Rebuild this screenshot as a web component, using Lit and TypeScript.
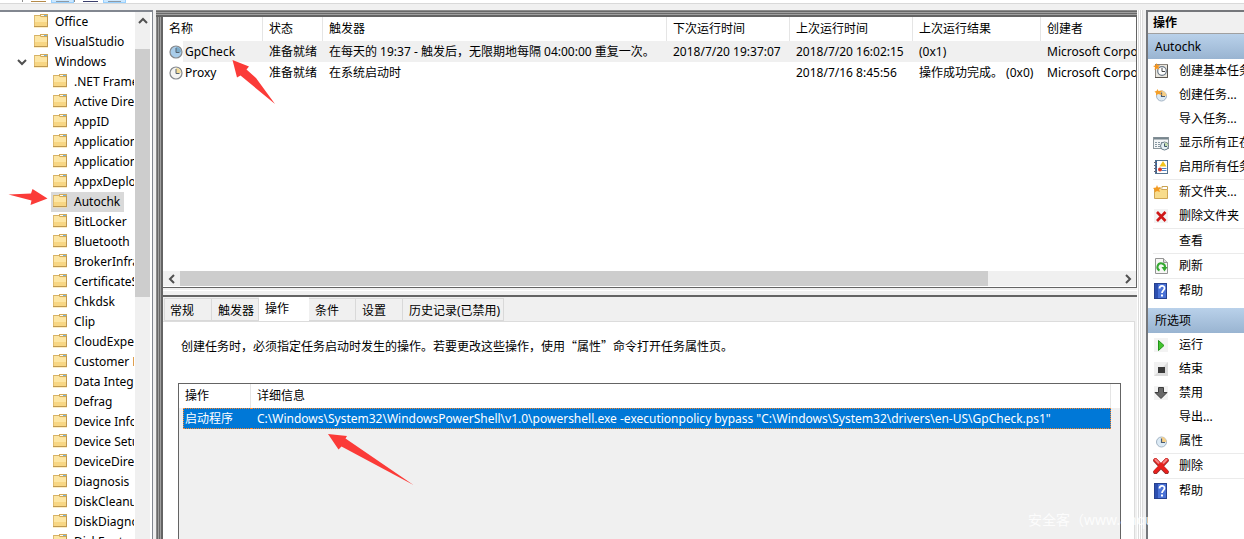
import { LitElement, html, css, svg, nothing } from "lit";
import { customElement, property, state } from "lit/decorators.js";
import { classMap } from "lit/directives/class-map.js";

const base = css`
  * {
    box-sizing: border-box;
  }
  button {
    font: inherit;
    color: inherit;
    background: none;
    border: 0;
    margin: 0;
    padding: 0;
    text-align: left;
    white-space: nowrap;
  }
  svg {
    display: block;
    flex: none;
  }
`;

const folder = html`<svg width="16" height="16" viewBox="0 0 16 16" aria-hidden="true">
  <path d="M1 1h14v12.500H1z" fill="#f9dc90" />
  <path d="M1 1h6v1H1z" fill="#d6b267" />
  <path d="M7 0h8v3H7z" fill="#d2a95a" />
  <path d="M8 1h3v1H8z" fill="#fffbe8" /><path d="M11 1h3v1h-3z" fill="#74b4dc" />
  <path d="M2 2h5l1 1.500h6V8H2z" fill="#fde6a4" />
  <path d="M2 8h12v4H2z" fill="#f7d684" />
  <path d="M1.500 1.500v11" stroke="#dfbc72" />
  <path d="M14.500 2v11M1 12.500h14" stroke="#bf9850" fill="none" />
</svg>`;

const clock = (face: string, wedge: string) => html`<svg width="14" height="14" viewBox="0 0 14 14" aria-hidden="true">
  <circle cx="7" cy="7" r="6" fill=${face} stroke="#85888c" stroke-width="1.200" />
  <path d="M7 7V2a5 5 0 0 1 5 5z" fill=${wedge} />
  <path d="M7 3V7.500H10.500" fill="none" stroke="#56636f" />
</svg>`;

const chevron = (d: string) => html`<svg width="10" height="10" viewBox="0 0 10 10" aria-hidden="true">
  <path d=${d} fill="none" stroke="#505050" stroke-width="2" />
</svg>`;

const smallClock = svg`
  <circle cx="8.500" cy="9" r="5" fill="#dceaf5" stroke="#a3b4c4"/>
  <path d="M8.500 9V4a5 5 0 0 1 5 5z" fill="#f7cf87"/>
  <path d="M8.500 5.500V9.500H12" fill="none" stroke="#4b5d72" stroke-width="1.200"/>`;

const glyphs: Record<string, unknown> = {
  basic: svg`
    <rect x="2.500" y="1.500" width="12" height="13" fill="#e9e6de" stroke="#8d8780"/>
    <path d="M14.500 2v12.500H2" fill="none" stroke="#5b5650"/>
    <circle cx="9" cy="8" r="4.300" fill="#fff" stroke="#6d7a88" stroke-width="1.200"/>
    <path d="M9 5v3.500h3" fill="none" stroke="#444"/>
    <path d="M3.500 0l1 2.300L7 2l-1.700 2L6.500 6.500 4 5.500 1.500 7 2 4.300 0 3l2.500-.5z" fill="#f5951d"/>`,
  task: svg`${smallClock}
    <path d="M4.500 2l1 2L10 3.500 7.500 5.500 9 8 5 7 3 8.500V6L1.500 4.500l2-.5z" fill="#f5a02a"/>`,
  running: svg`
    <rect x=".5" y="2.500" width="15" height="11" fill="#f4f6f7" stroke="#8b969c"/>
    <path d="M1 3.500h14" stroke="#76858d" stroke-width="2"/>
    <path d="M2 7.500h2m1 0h2m1 0h2M2 9.500h2m1 0h2M2 11.500h2m1 0h2" stroke="#8797a1"/>
    <circle cx="11.500" cy="11" r="4" fill="#e4f0f4" stroke="#6a7d88"/>
    <path d="M11.500 11V7.500A3.500 3.500 0 0 1 15 11z" fill="#c1dbae"/>
    <path d="M11.500 8.500V11.500H14" fill="none" stroke="#40566a"/>`,
  history: svg`
    <rect x="2.500" y="1.500" width="12" height="13" fill="#fff" stroke="#57748f"/>
    <path d="M3.500 2v12" stroke="#2f5f9f"/>
    <path d="M1 3.500h3M1 6.500h3M1 9.500h3M1 12.500h3" stroke="#667"/>
    <path d="M10 2l3.500 5.500h-7z" fill="#f4c51c"/>
    <path d="M8.500 9.500h5m-5 2h5" stroke="#4f82c4"/>
    <circle cx="7" cy="10.500" r="2" fill="#d83a2b"/>`,
  newFolder: svg`
    <path d="M9 4.500v-2h5.500v3" fill="#fff" stroke="#c9a252"/>
    <path d="M1.500 4.500h6L9 5.500h5.500v9h-13z" fill="#f8dc8c" stroke="#cfa655"/>
    <path d="M4 1l1 2.500 3-.5-2 2.500L7 8 4 7 1.500 8.500 2 6 0 4l3-.5z" fill="#f39a20"/>`,
  redX: svg`
    <rect x="1" y="1" width="14" height="14" fill="#f3f3f3"/>
    <path d="M4 4l8.500 9M12.500 4L4 13" stroke="#cf1717" stroke-width="2.600"/>`,
  refresh: svg`
    <path d="M2.500.5h8l4 4v11h-12z" fill="#f7f7f5" stroke="#959595"/>
    <path d="M10.500.5v4h4" fill="#ddd" stroke="#959595"/>
    <path d="M6.500 12.500A3.800 3.800 0 1 1 12 9.500" fill="none" stroke="#35a831" stroke-width="2"/>
    <path d="M8.500 9h6l-3 4.500z" fill="#35a831"/>`,
  help: svg`
    <rect x="1.500" y=".5" width="12" height="15" fill="#4a72d6" stroke="#27418f"/>
    <path d="M2 1h3v14H2z" fill="#2c4fb0"/>
    <path d="M6.500 5.500C6.500 2 11.500 2 11.500 5.200c0 2-2.500 2.300-2.500 4.800" fill="none" stroke="#fff" stroke-width="1.800"/>
    <path d="M8 11.500h2v2H8z" fill="#fff"/>`,
  run: svg`
    <rect x="1" y="1" width="14" height="14" fill="#f3f3f3"/>
    <path d="M5.500 3.500l5.500 5-5.500 5z" fill="#43c52e" stroke="#23931a"/>`,
  stop: svg`
    <rect x="1" y="1" width="14" height="14" fill="#dcdcdc"/>
    <path d="M1 1h14L1 15z" fill="#f1f1f1"/>
    <rect x="5" y="6" width="7" height="6" fill="#3a3a3a"/>`,
  disable: svg`
    <rect x="1" y="1" width="14" height="14" fill="#f3f3f3"/>
    <path d="M5.500 2.500h5v5h3.500L8 13.500 2 7.500h3.500z" fill="#686868" stroke="#3d3d3d"/>`,
  props: smallClock,
  remove: svg`
    <path d="M2.500 2.500l11 11.500M13.500 2.500L2.500 14" stroke="#8d3030" stroke-width="4.600" stroke-linecap="round"/>
    <path d="M2.500 2l11 11.500M13.500 2L2.500 13.500" stroke="#e8201c" stroke-width="3.600" stroke-linecap="round"/>
    <path d="M2.500 1.800l3 3M13.500 1.800l-3 3" stroke="#f58585" stroke-width="2" stroke-linecap="round"/>`,
};

@customElement("tool-strip")
class ToolStrip extends LitElement {
  static styles = [
    base,
    css`
      :host {
        display: flex;
        height: 4px;
        padding-left: 22px;
        background: #fff;
        border-bottom: 1px solid #d9d9d9;
        overflow: hidden;
      }
      .rule {
        width: 1px;
        height: 2px;
        margin-right: 3px;
        background: #8d8d8d;
      }
      .tool {
        width: 25px;
        height: 3px;
        padding: 0 5px;
      }
      .tool.on {
        width: 23px;
        padding: 0 4px;
        background: #cce8ff;
        border: 1px solid #99d1ff;
        border-top: 0;
      }
      .mark {
        display: block;
        height: 1px;
        background: #3b3f6c;
      }
      .brown {
        background: #b58a48;
      }
      .grey {
        background: #8e9aa5;
      }
    `,
  ];
  render() {
    return html`
      <span class="rule"></span>
      <button class="tool" aria-label="上移"><span class="mark brown"></span></button>
      <button class="tool on" aria-label="控制台树"><span class="mark grey"></span></button>
      <span class="tool-gap"></span>
      <span class="rule"></span>
      <button class="tool" aria-label="帮助"><span class="mark"></span></button>
      <button class="tool on" aria-label="操作窗格"><span class="mark grey"></span></button>
    `;
  }
}

const treeItems = [
  ".NET Framework", "Active Directory", "AppID", "Application Experience", "ApplicationData",
  "AppxDeploymentClient", "Autochk", "BitLocker", "Bluetooth", "BrokerInfrastructure",
  "CertificateServices", "Chkdsk", "Clip", "CloudExperienceHost", "Customer Experience",
  "Data Integrity Scan", "Defrag", "Device Information", "Device Setup", "DeviceDirectory",
  "Diagnosis", "DiskCleanup", "DiskDiagnostic", "DiskFootprint",
];

@customElement("library-tree")
class LibraryTree extends LitElement {
  @state() selected = "Autochk";

  static styles = [
    base,
    css`
      :host {
        display: flex;
        flex: none;
        gap: 1px;
        width: 153px;
        min-height: 0;
        background: #fff;
        border-top: 2px solid #828790;
        border-right: 1px solid #828790;
        padding-right: 2px;
        overflow: hidden;
      }
      .items {
        flex: 1;
        min-width: 0;
        overflow: hidden;
      }
      .row {
        display: flex;
        align-items: center;
        height: 20px;
        padding-left: 32px;
      }
      .row.deep {
        padding-left: 51px;
      }
      .row.open {
        padding-left: 17px;
      }
      .twist {
        width: 15px;
      }
      .node {
        display: flex;
        align-items: center;
        gap: 6px;
        height: 20px;
        padding: 0 4px 0 1px;
      }
      .node.on {
        background: #d9d9d9;
      }
      .bar {
        display: flex;
        flex-direction: column;
        width: 15px;
        background: #f0f0f0;
      }
      .up {
        display: grid;
        place-items: center;
        height: 37px;
        padding-bottom: 19px;
      }
      .thumb {
        height: 47%;
        background: #cdcdcd;
      }
    `,
  ];

  node(name: string) {
    return html`<button
      role="treeitem"
      class=${classMap({ node: true, on: name === this.selected })}
      @click=${() => (this.selected = name)}
    >${folder}${name}</button>`;
  }

  render() {
    return html`
      <div class="items" role="tree">
        <div class="row">${this.node("Office")}</div>
        <div class="row">${this.node("VisualStudio")}</div>
        <div class="row open">
          <button class="twist" aria-label="折叠">${chevron("M1 3l4 4 4-4")}</button>${this.node("Windows")}
        </div>
        ${treeItems.map((t) => html`<div class="row deep">${this.node(t)}</div>`)}
      </div>
      <div class="bar">
        <button class="up" aria-label="向上滚动">${chevron("M1 7l4-4 4 4")}</button>
        <div class="thumb"></div>
      </div>
    `;
  }
}

const tasks = [
  ["GpCheck", "准备就绪", "在每天的 19:37 - 触发后，无限期地每隔 04:00:00 重复一次。", "2018/7/20 19:37:07", "2018/7/20 16:02:15", "(0x1)", "Microsoft Corporation"],
  ["Proxy", "准备就绪", "在系统启动时", "", "2018/7/16 8:45:56", "操作成功完成。 (0x0)", "Microsoft Corporation"],
];

@customElement("task-list")
class TaskList extends LitElement {
  static styles = [
    base,
    css`
      :host {
        display: flex;
        flex-direction: column;
        height: 271px;
        background: #fff;
        border-bottom: 1px solid #646464;
        border-right: 1px solid #646464;
      }
      .view {
        flex: 1;
        min-height: 0;
        overflow: hidden;
      }
      table {
        table-layout: fixed;
        width: 1029px;
        border-collapse: separate;
        border-spacing: 0;
      }
      th,
      td {
        height: 21px;
        padding: 0 0 0 6px;
        font-weight: 400;
        text-align: left;
        white-space: nowrap;
        overflow: hidden;
      }
      th {
        height: 24px;
        border-right: 1px solid #e5e5e5;
      }
      .on td {
        background: #f0f0f0;
      }
      .on td:first-child {
        background: #fff;
      }
      .c1 { width: 100px; }
      .c2 { width: 60px; }
      .c3 { width: 344px; }
      .c4 { width: 123px; }
      .c6 { width: 128px; }
      .c7 { width: 151px; }
      .name {
        display: flex;
        align-items: center;
      }
      .label {
        flex: 1;
        line-height: 21px;
        padding-left: 2px;
      }
      .on .label {
        background: #f0f0f0;
      }
      .bar {
        display: flex;
        height: 16px;
        padding-bottom: 1px;
        background: linear-gradient(#f0f0f0 15px, #fff 15px);
      }
      .arrow {
        display: grid;
        place-items: center;
        width: 17px;
      }
      .track {
        flex: 1;
      }
      .thumb {
        width: 86%;
        height: 15px;
        background: #cdcdcd;
      }
    `,
  ];
  render() {
    return html`
      <div class="view">
        <table>
          <colgroup>
            <col class="c1" /><col class="c2" /><col class="c3" /><col class="c4" /><col class="c4" /><col class="c6" /><col class="c7" />
          </colgroup>
          <thead>
            <tr>
              <th>名称</th><th>状态</th><th>触发器</th><th>下次运行时间</th><th>上次运行时间</th><th>上次运行结果</th><th>创建者</th>
            </tr>
          </thead>
          <tbody>
            ${tasks.map(
              (row, i) => html`<tr class=${i === 0 ? "on" : ""}>
                ${row.map((cell, c) =>
                  c === 0
                    ? html`<td><div class="name">${i === 0 ? clock("#a9cdea", "#7cabc9") : clock("#f4f4f2", "#f2dc9a")}<span class="label">${cell}</span></div></td>`
                    : html`<td>${cell}</td>`
                )}
              </tr>`
            )}
          </tbody>
        </table>
      </div>
      <div class="bar">
        <button class="arrow" aria-label="向左滚动">${chevron("M7 1L3 5l4 4")}</button>
        <div class="track"><div class="thumb"></div></div>
        <button class="arrow" aria-label="向右滚动">${chevron("M3 1l4 4-4 4")}</button>
      </div>
    `;
  }
}

@customElement("task-detail")
class TaskDetail extends LitElement {
  @state() tab = 2;

  static styles = [
    base,
    css`
      :host {
        display: flex;
        flex-direction: column;
        flex: 1;
        min-height: 0;
        padding-right: 2px;
        background: #f0f0f0;
        border-top: 2px solid #646464;
      }
      .tabs {
        display: flex;
        align-items: flex-end;
        height: 24px;
        padding-left: 1px;
      }
      .tab {
        height: 23px;
        width: 47px;
        padding: 2px 0 0 6px;
        border: 1px solid #d9d9d9;
        border-left: 0;
      }
      .tab:first-child {
        width: 48px;
        padding-left: 5px;
        border-left: 1px solid #d9d9d9;
      }
      .tab.on {
        width: 50px;
        height: 25px;
        padding-bottom: 2px;
        padding-top: 0;
        background: #fff;
        border-color: #fff;
        margin-bottom: -1px;
      }
      .tab.wide {
        width: auto;
        padding-right: 3px;
      }
      .page {
        display: flex;
        flex-direction: column;
        flex: 1;
        min-height: 0;
        padding: 15px 13px 0 15px;
        background: #fff;
        border-top: 1px solid #dcdcdc;
        border-right: 1px solid #dcdcdc;
      }
      p {
        margin: 0 0 28px;
        padding-left: 3px;
        font-family: "Noto Sans CJK SC", sans-serif;
        line-height: 18px;
      }
      .list {
        flex: 1;
        min-height: 0;
        background: #f0f0f0;
        border: 1px solid #646464;
        border-bottom: 0;
      }
      table {
        table-layout: fixed;
        width: 100%;
        border-collapse: separate;
        border-spacing: 0;
        white-space: nowrap;
      }
      th {
        height: 24px;
        padding: 0 0 0 6px;
        text-align: left;
        font-weight: 400;
        background: #fff;
        border-right: 1px solid #e5e5e5;
      }
      th:last-child {
        border: 0;
      }
      .act { width: 72px; }
      .end { width: 9px; }
      td {
        height: 21px;
        padding: 0;
      }
      .cell {
        height: 21px;
        line-height: 19px;
        padding-left: 6px;
        color: #fff;
        background: #0078d7;
        border: 1px dotted #ff8728;
        border-width: 1px 0;
      }
      .first {
        margin-left: 4px;
        padding-left: 1px;
        border-left-width: 1px;
      }
      .last {
        border-right-width: 1px;
      }
    `,
  ];
  render() {
    const names = ["常规", "触发器", "操作", "条件", "设置", "历史记录(已禁用)"];
    return html`
      <div class="tabs" role="tablist">
        ${names.map(
          (n, i) => html`<button
            role="tab"
            aria-selected=${i === this.tab}
            class=${classMap({ tab: true, on: i === this.tab, wide: i === 5 })}
            @click=${() => (this.tab = i)}
          >${n}</button>`
        )}
      </div>
      <div class="page" role="tabpanel">
        <p>创建任务时，必须指定任务启动时发生的操作。若要更改这些操作，使用“属性”命令打开任务属性页。</p>
        <div class="list">
          <table>
            <colgroup><col class="act" /><col /><col class="end" /></colgroup>
            <thead>
              <tr><th>操作</th><th>详细信息</th><th></th></tr>
            </thead>
            <tbody>
              <tr>
                <td><div class="cell first">启动程序</div></td>
                <td><div class="cell last">C:\\Windows\\System32\\WindowsPowerShell\\v1.0\\powershell.exe -executionpolicy bypass "C:\\Windows\\System32\\drivers\\en-US\\GpCheck.ps1"</div></td>
                <td></td>
              </tr>
            </tbody>
          </table>
        </div>
      </div>
    `;
  }
}

type Action = [icon: string, label: string, ruled?: boolean];

const folderActions: Action[] = [
  ["basic", "创建基本任务..."],
  ["task", "创建任务..."],
  ["", "导入任务..."],
  ["running", "显示所有正在运行的任务"],
  ["history", "启用所有任务历史记录", true],
  ["newFolder", "新文件夹..."],
  ["redX", "删除文件夹", true],
  ["", "查看", true],
  ["refresh", "刷新", true],
  ["help", "帮助"],
];
const itemActions: Action[] = [
  ["run", "运行"],
  ["stop", "结束"],
  ["disable", "禁用"],
  ["", "导出..."],
  ["props", "属性", true],
  ["remove", "删除", true],
  ["help", "帮助"],
];

@customElement("action-group")
class ActionGroup extends LitElement {
  @property() heading = "";
  @property({ attribute: false }) actions: Action[] = [];

  static styles = [
    base,
    css`
      :host {
        display: block;
        margin-bottom: 5px;
      }
      h3 {
        margin: 0;
        height: 25px;
        padding-left: 7px;
        font-size: 12px;
        font-weight: 400;
        line-height: 25px;
        background: linear-gradient(#b9d1ea, #99b4d1);
      }
      .action {
        display: flex;
        align-items: center;
        gap: 10px;
        width: 100%;
        height: 24px;
        padding-left: 5px;
      }
      .icon {
        flex: none;
        width: 16px;
        height: 16px;
      }
      .rule {
        height: 1px;
        margin-left: 5px;
        background: #ebebeb;
      }
    `,
  ];
  render() {
    return html`
      <h3>${this.heading}</h3>
      ${this.actions.map(
        ([icon, label, ruled]) => html`
          <button class="action">
            <span class="icon">${icon ? html`<svg width="16" height="16" viewBox="0 0 16 16" aria-hidden="true">${glyphs[icon]}</svg>` : nothing}</span>${label}
          </button>
          ${ruled ? html`<div class="rule"></div>` : nothing}
        `
      )}
    `;
  }
}

@customElement("app-root")
class AppRoot extends LitElement {
  static styles = [
    base,
    css`
      :host {
        position: relative;
        display: flex;
        flex-direction: column;
        height: 100vh;
        overflow: hidden;
        background: #f0f0f0;
        color: #000;
        font: 12px/18px "Noto Sans", "Noto Sans CJK SC", sans-serif;
      }
      .panes {
        display: flex;
        flex: 1;
        min-height: 0;
        gap: 3px;
        padding-top: 6px;
      }
      .frame {
        display: flex;
        flex: 1;
        min-width: 0;
        padding: 7px 6px 0 7px;
        background: repeating-linear-gradient(90deg, #fff 0 1px, #dcdcdc 1px 2px) right / 6px 100% no-repeat,
          linear-gradient(#8c8c8c 0 1px, #696969 1px 2px, #a0a0a0 2px 3px, #696969 3px 4px, #a0a0a0 4px 5px, #646464 5px) top / 100% 7px no-repeat,
          linear-gradient(90deg, #8c8c8c 0 1px, #696969 1px 2px, #a0a0a0 2px 3px, #696969 3px 4px, #a0a0a0 4px 5px, #646464 5px) left / 7px 100% no-repeat;
      }
      .middle {
        display: flex;
        flex-direction: column;
        flex: 1;
        min-width: 0;
        background: #f0f0f0;
      }
      .split {
        flex: none;
        height: 7px;
        border-top: 2px solid #f0f0f0;
        background: linear-gradient(#fff 1px, #f0f0f0 1px);
      }
      .actions {
        flex: none;
        width: 98px;
        overflow: hidden;
        background: #fff;
        border-top: 2px solid #75777b;
        border-left: 2px solid #75777b;
      }
      h2 {
        height: 22px;
        margin: 0;
        padding-left: 5px;
        font-size: 12px;
        line-height: 21px;
        background: #f0f0f0;
        border-bottom: 1px solid #a0a0a0;
      }
      .notes {
        position: absolute;
        left: 0;
        top: 0;
        fill: #fb3b38;
        pointer-events: none;
      }
      .credit {
        position: absolute;
        left: 1028px;
        top: 511px;
        font-size: 14px;
        color: #ffffffd9;
        white-space: nowrap;
        pointer-events: none;
      }
    `,
  ];
  render() {
    return html`
      <tool-strip></tool-strip>
      <div class="panes">
        <library-tree></library-tree>
        <div class="frame">
          <div class="middle">
            <task-list></task-list>
            <div class="split"></div>
            <task-detail></task-detail>
          </div>
        </div>
        <div class="actions">
          <h2>操作</h2>
          <action-group heading="Autochk" .actions=${folderActions}></action-group>
          <action-group heading="所选项" .actions=${itemActions}></action-group>
        </div>
      </div>
      <svg class="notes" width="420" height="500" viewBox="0 0 420 500" aria-hidden="true">
        <path d="M232.500 60L249 66.500 246.500 69.500 256 78 275 104 240.500 75.500 237 77.500z" />
        <path d="M47.500 198.500L32.500 189 31 193.500 8.500 194.500 31.500 200.500 30.500 205z" />
        <path d="M328 434L347 436 345.500 438.500 413.500 485 341.500 446.500 338.500 449.500z" />
      </svg>
      <div class="credit">安全客（www.anquanke.com）</div>
    `;
  }
}
